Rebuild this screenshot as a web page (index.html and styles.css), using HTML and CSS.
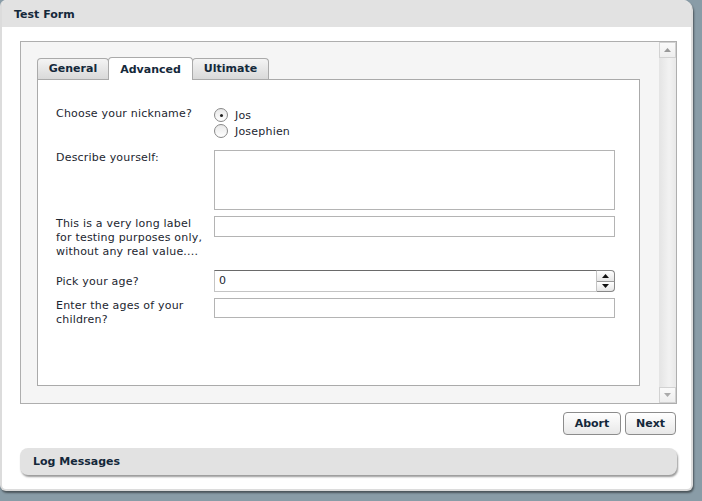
FILE: index.html
```html
<!DOCTYPE html>
<html>
<head>
<meta charset="utf-8">
<title>Test Form</title>
<link rel="stylesheet" href="styles.css">
</head>
<body>
<div class="window">
  <div class="win-header">Test Form</div>
  <div class="win-body">
    <div class="scroller">
      <div class="scroll-content">
        <div class="tabs">
          <div class="tab">General</div>
          <div class="tab active">Advanced</div>
          <div class="tab">Ultimate</div>
        </div>
        <div class="pane">
          <div class="row r1">
            <div class="label">Choose your nickname?</div>
            <div class="radios">
              <div class="radio-item"><span class="radio checked"></span><span>Jos</span></div>
              <div class="radio-item"><span class="radio"></span><span>Josephien</span></div>
            </div>
          </div>
          <div class="row r2">
            <div class="label">Describe yourself:</div>
            <div class="textarea"></div>
          </div>
          <div class="row r3">
            <div class="label">This is a very long label for testing purposes only, without any real value....</div>
            <div class="input"></div>
          </div>
          <div class="row r4">
            <div class="label">Pick your age?</div>
            <div class="spinner">
              <div class="spin-input">0</div>
              <div class="spin-btns">
                <div class="spin-btn up"><svg width="7" height="4" viewBox="0 0 7 4"><path d="M0 4 L3.5 0 L7 4 Z" fill="#111"/></svg></div>
                <div class="spin-btn down"><svg width="7" height="4" viewBox="0 0 7 4"><path d="M0 0 L3.5 4 L7 0 Z" fill="#111"/></svg></div>
              </div>
            </div>
          </div>
          <div class="row r5">
            <div class="label">Enter the ages of your children?</div>
            <div class="input"></div>
          </div>
        </div>
      </div>
      <div class="scrollbar">
        <div class="sb-btn"><svg width="7" height="4" viewBox="0 0 7 4"><path d="M0 4 L3.5 0 L7 4 Z" fill="#999"/></svg></div>
        <div class="sb-track"></div>
        <div class="sb-btn"><svg width="7" height="4" viewBox="0 0 7 4"><path d="M0 0 L3.5 4 L7 0 Z" fill="#aaa"/></svg></div>
      </div>
    </div>
    <div class="buttons">
      <div class="btn btn-abort">Abort</div>
      <div class="btn btn-next">Next</div>
    </div>
    <div class="logbar">Log Messages</div>
  </div>
</div>
</body>
</html>
```
FILE: styles.css
```css
html, body {
  margin: 0;
  padding: 0;
}
body {
  background: #899ca7;
  width: 702px;
  height: 501px;
  overflow: hidden;
  font-family: "DejaVu Sans", Verdana, sans-serif;
  font-size: 11px;
  color: #1c2630;
}
.window {
  width: 693px;
  height: 491px;
  box-sizing: border-box;
  background: #fff;
  border: 2px solid #dcdcdc;
  border-top: none;
  border-radius: 6px 10px 6px 6px;
  box-shadow: 1px 2px 2px rgba(0, 0, 0, 0.45);
  overflow: hidden;
}
.win-header {
  height: 27px;
  background: #e2e2e2;
  font-weight: bold;
  font-size: 11px;
  line-height: 29px;
  padding-left: 12px;
  color: #14283a;
}
.win-body {
  padding: 14px 14px 0 18px;
}
.scroller {
  display: flex;
  height: 363px;
  box-sizing: border-box;
  border: 1px solid #aeaeae;
  background: #f5f5f5;
}
.scroll-content {
  flex: 1;
  padding: 16px 19px 17px 16px;
  display: flex;
  flex-direction: column;
}
.tabs {
  display: flex;
  align-items: flex-end;
  height: 21px;
  position: relative;
  z-index: 1;
}
.tab {
  height: 21px;
  box-sizing: border-box;
  border: 1px solid #aaa;
  border-bottom: none;
  border-radius: 4px 4px 0 0;
  background: linear-gradient(#f4f4f4, #d9d9d9);
  font-weight: bold;
  line-height: 20px;
  text-align: center;
  color: #14283a;
  margin-right: -1px;
}
.tab:nth-child(1) { width: 72px; }
.tab:nth-child(2) { width: 85px; }
.tab:nth-child(3) { width: 77px; }
.tab.active {
  height: 23px;
  background: #fff;
  line-height: 24px;
  margin-bottom: -1px;
  position: relative;
  z-index: 2;
}
.pane {
  flex: 1;
  background: #fff;
  border: 1px solid #aaa;
  padding: 26px 18px 0 18px;
}
.row {
  display: flex;
  align-items: flex-start;
}
.label {
  width: 148px;
  margin-right: 10px;
  line-height: 14px;
  padding-top: 1px;
  letter-spacing: 0.2px;
}
.r1 { height: 44px; }
.r2 { height: 66px; }
.r3 { height: 54px; }
.r4 { height: 28px; }
.r3 .label { padding-top: 1px; }
.r4 .label { padding-top: 5px; }
.r2 .label, .r5 .label { padding-top: 1px; }
.radios {
  display: flex;
  flex-direction: column;
  padding-top: 1px;
}
.radio-item {
  display: flex;
  align-items: center;
  height: 16px;
  letter-spacing: 0.2px;
}
.radio {
  width: 12px;
  height: 12px;
  border: 1px solid #888;
  border-radius: 50%;
  background: linear-gradient(#e8e8e8, #fff);
  margin-right: 7px;
  margin-left: 0;
  display: flex;
  align-items: center;
  justify-content: center;
}
.radio.checked::after {
  content: "";
  width: 3px;
  height: 3px;
  border-radius: 50%;
  background: #222;
}
.textarea {
  width: 401px;
  height: 60px;
  box-sizing: border-box;
  border: 1px solid #b4b4b4;
  background: #fff;
}
.input {
  width: 401px;
  height: 21px;
  box-sizing: border-box;
  border: 1px solid #b4b4b4;
  background: #fff;
}
.r5 .input { height: 20px; }
.spinner {
  display: flex;
  width: 401px;
  height: 22px;
}
.spin-input {
  flex: 1;
  box-sizing: border-box;
  border: 1px solid #c4c4c4;
  border-top-color: #6a6a6a;
  padding-left: 4px;
  line-height: 20px;
  font-size: 11px;
  background: #fff;
}
.spin-btns {
  width: 18px;
  display: flex;
  flex-direction: column;
}
.spin-btn {
  flex: 1;
  box-sizing: border-box;
  border: 1px solid #888;
  border-left: none;
  background: linear-gradient(#fff, #e6e6e6);
  display: flex;
  align-items: center;
  justify-content: center;
}
.spin-btn.up { border-radius: 0 4px 0 0; border-bottom: 1px solid #999; }
.spin-btn.down { border-radius: 0 0 4px 0; border-top: none; }
.scrollbar {
  width: 17px;
  display: flex;
  flex-direction: column;
  background: #ececec;
}
.sb-btn {
  height: 16px;
  box-sizing: border-box;
  border: 1px solid #d2d2d2;
  background: linear-gradient(#fafafa, #eeeeee);
  display: flex;
  align-items: center;
  justify-content: center;
}
.sb-track {
  flex: 1;
  background: linear-gradient(90deg, #e4e4e4, #f2f2f2 60%, #e8e8e8);
}
.buttons {
  display: flex;
  justify-content: flex-end;
  gap: 4px;
  margin-top: 8px;
  padding-right: 1px;
}
.btn {
  height: 23px;
  box-sizing: border-box;
  border: 1px solid #8c8c8c;
  border-radius: 4px;
  background: linear-gradient(#ffffff, #e8e8e8);
  font-weight: bold;
  line-height: 21px;
  text-align: center;
  color: #14283a;
}
.btn-abort { width: 58px; }
.btn-next { width: 51px; }
.logbar {
  margin-top: 13px;
  height: 27px;
  background: #e2e2e2;
  border-radius: 8px;
  box-shadow: 1px 2px 2px rgba(0, 0, 0, 0.4);
  font-weight: bold;
  line-height: 27px;
  padding-left: 13px;
  color: #14283a;
}
```
